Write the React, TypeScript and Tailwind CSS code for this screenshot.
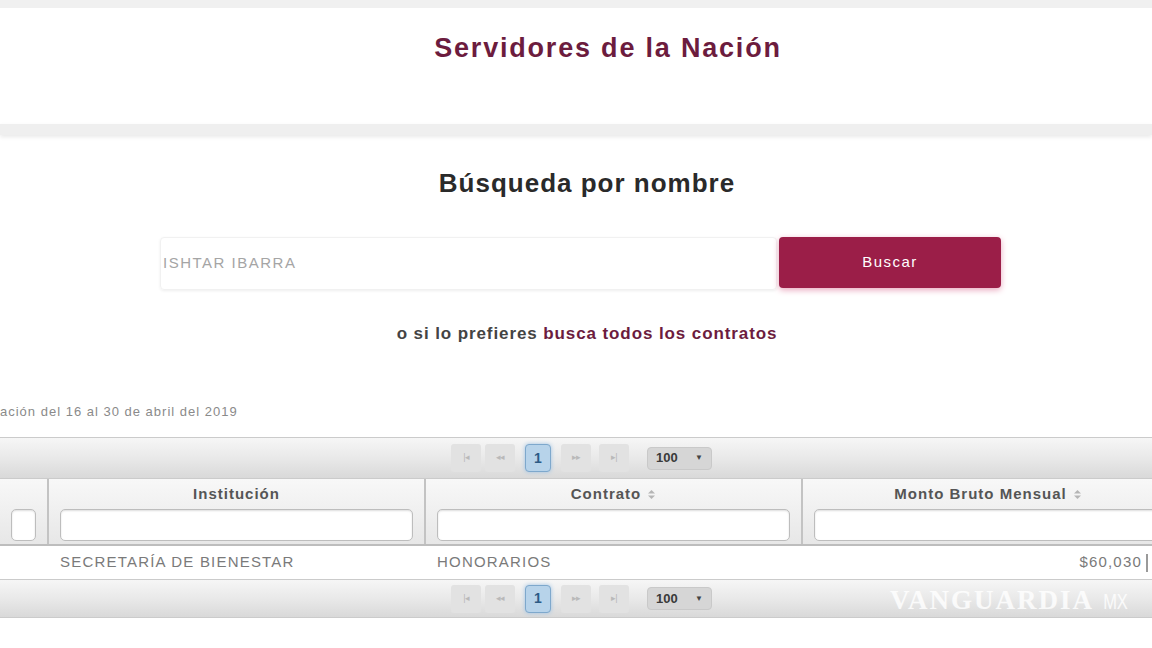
import React from "react";

const font = "font-['Liberation_Sans',Arial,sans-serif]";

function SortIcon() {
  return (
    <svg width="9" height="11" viewBox="0 0 9 11" className="inline-block ml-[6px] align-[-1px]">
      <path d="M4.5 1 L8 4.5 L1 4.5 Z" fill="#b5b5b5" />
      <path d="M4.5 10 L8 6.5 L1 6.5 Z" fill="#b5b5b5" />
    </svg>
  );
}

function Pager() {
  const btn =
    "w-[30px] h-[28px] rounded-[3px] bg-[#e2e2e2] flex items-center justify-center text-[9px] text-[#b9b9b9] tracking-[-1px]";
  return (
    <div className="flex items-center ml-[451px] gap-[4px]">
      <div className={btn}>|◂</div>
      <div className={btn}>◂◂</div>
      <div className="w-[26px] h-[28px] mx-[6px] rounded-[4px] bg-[#b7d3ea] border border-[#7ea8cc] shadow-[0_0_4px_#9ec3e4] flex items-center justify-center text-[14px] font-bold text-[#2c5b86]">
        1
      </div>
      <div className={btn}>▸▸</div>
      <div className={`${btn} ml-[4px]`}>▸|</div>
      <div className="ml-[14px] w-[65px] h-[23px] rounded-[4px] bg-[#d6d6d6] border border-[#c9c9c9] flex items-center justify-between px-[8px]">
        <span className="text-[13px] font-bold text-[#3a3a3a]">100</span>
        <span className="text-[8px] text-[#444]">▼</span>
      </div>
    </div>
  );
}

function PagerBar({ h }: { h: string }) {
  return (
    <div
      className={`${h} flex items-center border-y border-[#cbcbcb] bg-gradient-to-b from-[#f6f6f6] via-[#e9e9e9] to-[#d9d9d9]`}
    >
      <Pager />
    </div>
  );
}

function HeaderCell({ title, sort, w }: { title?: string; sort?: boolean; w: string }) {
  return (
    <div className={`${w} shrink-0 h-full border-r-2 border-[#c3c3c3] flex flex-col`}>
      <div className="h-[30px] flex items-center justify-center text-[15px] tracking-[1px] font-bold text-[#555]">
        {title}
        {sort && <SortIcon />}
      </div>
      <div className="px-[11px]">
        <div className="h-[32px] bg-white rounded-[5px] border border-[#bdbdbd] shadow-[inset_0_1px_2px_#ddd]" />
      </div>
    </div>
  );
}

export default function App() {
  return (
    <div className={`w-[1152px] h-[648px] overflow-hidden bg-white ${font}`}>
      {/* top card */}
      <div className="h-[8px] bg-[#f0f0f0] shadow-[0_2px_4px_#e6e6e6]" />
      <div className="h-[116px] bg-white flex justify-center pl-[64px] pt-[25px]">
        <h1 className="text-[27px] leading-[30px] font-bold text-[#6c1c3e] tracking-[1.8px]">
          Servidores de la Nación
        </h1>
      </div>
      <div className="h-[11px] bg-[#efefef] shadow-[0_2px_4px_#e9e9e9]" />

      {/* search */}
      <div className="ml-[160px] w-[854px] flex flex-col items-center pt-[33px]">
        <h2 className="text-[26px] leading-[30px] font-bold text-[#2a2a2a] tracking-[1px]">Búsqueda por nombre</h2>
        <div className="self-stretch flex mt-[39px] gap-[2px]">
          <div className="w-[617px] h-[53px] rounded-[4px] border border-[#f1f1f1] shadow-[0_1px_3px_#eeeeee] flex items-center pl-[2px] text-[15px] tracking-[1.5px] text-[#a5a5a5]">
            ISHTAR IBARRA
          </div>
          <button className="w-[222px] h-[51px] rounded-[4px] bg-[#9b1e48] text-white text-[15px] tracking-[1.5px] shadow-[0_2px_6px_#e9a7bd]">
            Buscar
          </button>
        </div>
        <p className="mt-[34px] text-[17px] leading-[20px] font-bold text-[#444] tracking-[0.9px]">
          o si lo prefieres <span className="text-[#6c1c3e]">busca todos los contratos</span>
        </p>
      </div>

      {/* results */}
      <p className="mt-[60px] text-[13px] leading-[16px] text-[#8a8a8a] tracking-[1px]">
        ación del 16 al 30 de abril del 2019
      </p>
      <div className="mt-[17px]">
        <PagerBar h="h-[42px]" />
        <div className="h-[67px] flex bg-gradient-to-b from-[#f8f8f8] to-[#e7e7e7] border-b-2 border-[#bdbdbd]">
          <HeaderCell w="w-[49px]" />
          <HeaderCell w="w-[377px]" title="Institución" />
          <HeaderCell w="w-[377px]" title="Contrato" sort />
          <HeaderCell w="w-[372px]" title="Monto Bruto Mensual" sort />
        </div>
        <div className="h-[33px] flex items-center text-[15px] tracking-[1.2px] text-[#7a7a7a]">
          <div className="w-[49px] shrink-0" />
          <div className="w-[377px] shrink-0 pl-[11px]">SECRETARÍA DE BIENESTAR</div>
          <div className="w-[377px] shrink-0 pl-[11px]">HONORARIOS</div>
          <div className="w-[343px] shrink-0 text-right pr-[4px]">$60,030</div>
          <div className="h-[18px] border-l-2 border-[#9a9a9a]" />
        </div>
        <div className="relative">
          <PagerBar h="h-[39px]" />
          <div className="absolute left-[890px] top-[6px] flex items-end gap-[5px] text-white/80">
            <span className="font-['Liberation_Serif',serif] font-bold text-[27px] tracking-[2px] leading-[30px]">
              VANGUARDIA
            </span>
            <span className="font-['Liberation_Sans',sans-serif] text-[22px] leading-[26px] font-light scale-x-75">MX</span>
          </div>
        </div>
      </div>
    </div>
  );
}
